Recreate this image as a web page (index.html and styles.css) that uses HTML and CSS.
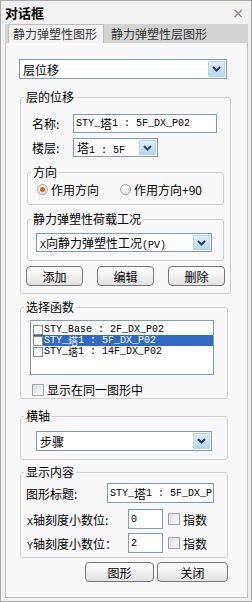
FILE: index.html
```html
<!DOCTYPE html>
<html lang="zh-CN">
<head>
    <meta charset="UTF-8">
    <title>对话框</title>
    <link rel="stylesheet" href="styles.css">
</head>
<body>
<div class="dialog">
    <div class="titlebar">
        <span class="title">对话框</span>
        <span class="close">×</span>
    </div>
    <div class="tabs">
        <span class="tab active">静力弹塑性图形</span>
        <span class="tab">静力弹塑性层图形</span>
    </div>

    <div class="panel">
        <div class="combo top-combo">
            <span>层位移</span>
            <span class="arrow"><svg width="9" height="6" viewBox="0 0 9 6"><path d="M1 1 L4.5 4.5 L8 1" fill="none" stroke="#2b3f63" stroke-width="2"/></svg></span>
        </div>

        <fieldset class="group g-disp">
            <legend>层的位移</legend>
            <div class="row first">
                <span class="label">名称:</span>
                <div class="textbox name-box mono">STY_<span class="cjk">塔</span>1 : 5F_DX_P02</div>
            </div>
            <div class="row">
                <span class="label">楼层:</span>
                <div class="combo floor-combo">
                    <span class="mono"><span class="cjk">塔</span>1 : 5F</span>
                    <span class="arrow"><svg width="9" height="6" viewBox="0 0 9 6"><path d="M1 1 L4.5 4.5 L8 1" fill="none" stroke="#2b3f63" stroke-width="2"/></svg></span>
                </div>
            </div>

            <fieldset class="group inner g-dir">
                <legend>方向</legend>
                <div class="radios">
                    <span class="radio checked"></span><span class="radio-text">作用方向</span>
                    <span class="radio"></span><span class="radio-text">作用方向+90</span>
                </div>
            </fieldset>

            <fieldset class="group inner g-case">
                <legend>静力弹塑性荷载工况</legend>
                <div class="combo case-combo">
                    <span><span class="mono">X</span>向静力弹塑性工况<span class="mono">(PV)</span></span>
                    <span class="arrow"><svg width="9" height="6" viewBox="0 0 9 6"><path d="M1 1 L4.5 4.5 L8 1" fill="none" stroke="#2b3f63" stroke-width="2"/></svg></span>
                </div>
            </fieldset>

            <div class="btn-row">
                <button class="btn small">添加</button>
                <button class="btn small">编辑</button>
                <button class="btn small">删除</button>
            </div>
        </fieldset>

        <fieldset class="group g-func">
            <legend>选择函数</legend>
            <div class="listbox mono">
                <div class="item"><span class="box"></span>STY_Base : 2F_DX_P02</div>
                <div class="item selected"><span class="box"></span>STY_<span class="cjk">塔</span>1 : 5F_DX_P02</div>
                <div class="item"><span class="box"></span>STY_<span class="cjk">塔</span>1 : 14F_DX_P02</div>
            </div>
            <div class="check-row">
                <span class="checkbox"></span><span>显示在同一图形中</span>
            </div>
        </fieldset>

        <fieldset class="group g-axis">
            <legend>横轴</legend>
            <div class="combo axis-combo">
                <span>步骤</span>
                <span class="arrow"><svg width="9" height="6" viewBox="0 0 9 6"><path d="M1 1 L4.5 4.5 L8 1" fill="none" stroke="#2b3f63" stroke-width="2"/></svg></span>
            </div>
        </fieldset>

        <fieldset class="group g-show">
            <legend>显示内容</legend>
            <div class="show-row title-row">
                <span class="show-label">图形标题:</span>
                <div class="textbox title-box mono">STY_<span class="cjk">塔</span>1 : 5F_DX_P</div>
            </div>
            <div class="show-row x-row">
                <span class="show-label wide"><span class="mono">X</span>轴刻度小数位:</span>
                <div class="textbox digit-box mono">0</div>
                <span class="checkbox"></span><span>指数</span>
            </div>
            <div class="show-row y-row">
                <span class="show-label wide"><span class="mono">Y</span>轴刻度小数位：</span>
                <div class="textbox digit-box mono">2</div>
                <span class="checkbox"></span><span>指数</span>
            </div>
        </fieldset>

        <div class="footer">
            <button class="btn wide-btn">图形</button>
            <button class="btn wide-btn close-btn">关闭</button>
        </div>
    </div>
</div>
</body>
</html>
```

FILE: styles.css
```css
* {
    box-sizing: border-box;
}
body {
    margin: 0;
    font-family: "Noto Sans CJK SC", sans-serif;
    font-size: 12px;
    color: #000;
    background: #fff;
}
.mono {
    font-family: "Liberation Mono", monospace;
    font-size: 10px;
}
.cjk {
    font-family: "Noto Sans CJK SC", sans-serif;
    font-size: 12px;
}
.dialog {
    width: 252px;
    height: 602px;
    border: 1px solid #a8a8a8;
    background: #f2f2f2;
    display: flex;
    flex-direction: column;
}
.titlebar {
    height: 23px;
    display: flex;
    align-items: center;
    justify-content: space-between;
    padding: 0 7px 0 4px;
}
.title {
    font-weight: bold;
    font-size: 13px;
}
.close {
    color: #7a7a7a;
    font-size: 14px;
    font-family: "DejaVu Sans", sans-serif;
}
.tabs {
    height: 19px;
    margin: 0 3px 0 4px;
    background: #d3d3d3;
    display: flex;
    align-items: flex-end;
    padding-left: 3px;
}
.tab {
    line-height: 18px;
    padding: 0 6px 0 4px;
    color: #333;
}
.tab.active {
    background: #f4f4f4;
    border: 1px solid #bdbdbd;
    border-bottom: none;
    margin-right: 3px;
}
.panel {
    flex: 1;
    margin: 0 3px 3px 4px;
    border: 1px solid #bdbdbd;
    border-top: none;
    background: #f8f8f8;
    padding: 16px 0 0 13px;
}

/* combo boxes */
.combo {
    height: 20px;
    border: 1px solid #7f9db9;
    background: #fff;
    display: flex;
    align-items: center;
    padding-left: 3px;
    white-space: nowrap;
}
.combo .arrow {
    margin-left: auto;
    margin-right: 1px;
    width: 17px;
    height: 16px;
    border: 1px solid #b9d4ee;
    border-radius: 1px;
    background: linear-gradient(#e1effb, #b5d5f3);
    display: flex;
    align-items: center;
    justify-content: center;
}
.top-combo {
    width: 208px;
}

/* group boxes */
.group {
    margin: 0;
    padding: 0;
    border: 1px solid #cfcfcf;
    border-radius: 3px;
}
.group legend {
    margin-left: 3px;
    padding: 0 2px;
    line-height: 14px;
}
.group:not(.inner) {
    width: 208px;
    margin-left: 1px;
}
.g-disp {
    margin-top: 11px;
    padding-bottom: 7px !important;
}
.row {
    display: flex;
    align-items: center;
    height: 19px;
    margin-top: 5px;
    padding-left: 11px;
}
.row.first {
    margin-top: 10px;
}
.label {
    width: 41px;
}
.textbox {
    height: 19px;
    border: 1px solid #7f9db9;
    background: #fff;
    display: flex;
    align-items: center;
    padding-left: 2px;
    white-space: nowrap;
    overflow: hidden;
}
.name-box {
    width: 144px;
}
.floor-combo {
    width: 85px;
    height: 19px;
}
.floor-combo .arrow {
    height: 15px;
}
.inner {
    margin: 8px 6px 0 6px;
}
.g-dir {
    padding-bottom: 8px;
}
.radios {
    display: flex;
    align-items: center;
    height: 14px;
    margin-top: 3px;
    padding-left: 9px;
    white-space: nowrap;
}
.radio {
    flex: none;
    width: 11px;
    height: 11px;
    border-radius: 50%;
    border: 1px solid #a9a9a9;
    background: radial-gradient(circle at 40% 35%, #ffffff, #d2d2d2);
    display: flex;
    align-items: center;
    justify-content: center;
}
.radio.checked::after {
    content: "";
    width: 5px;
    height: 5px;
    border-radius: 50%;
    background: #e4582a;
}
.radio-text {
    flex: none;
    margin-left: 3px;
    margin-right: 21px;
}
.g-case {
    margin-top: 7px;
    padding-bottom: 8px;
}
.case-combo {
    width: 176px;
    margin: 7px 0 0 8px;
    height: 19px;
}
.case-combo .arrow {
    height: 15px;
}
.btn-row {
    display: flex;
    justify-content: space-between;
    padding: 0 5px;
    margin-top: 5px;
}
.btn {
    height: 20px;
    padding: 0;
    font-family: "Noto Sans CJK SC", sans-serif;
    font-size: 12px;
    color: #000;
    border: 1px solid #767676;
    border-radius: 4px;
    background: linear-gradient(#ffffff 0%, #f3f3f3 45%, #e2e2e2 100%);
}
.btn.small {
    width: 57px;
}

/* function list */
.g-func {
    margin-top: 6px;
    padding-bottom: 2px !important;
}
.listbox {
    width: 184px;
    height: 55px;
    margin: 6px 0 0 9px;
    border: 1px solid #7f9db9;
    background: #fff;
    padding: 3px 0 0 2px;
}
.item {
    display: flex;
    align-items: center;
    height: 11px;
    line-height: 11px;
    white-space: nowrap;
}
.item .cjk {
    font-size: 10px;
    line-height: 11px;
}
.item.selected {
    background: #316ac5;
    color: #fff;
    width: 180px;
}
.box {
    flex: none;
    width: 10px;
    height: 10px;
    border: 1px solid #8a8a8a;
    background: #fff;
    margin-right: 1px;
}
.check-row {
    display: flex;
    align-items: center;
    height: 13px;
    margin: 8px 0 0 11px;
}
.checkbox {
    flex: none;
    width: 12px;
    height: 12px;
    border: 1px solid #9ba6b3;
    background: linear-gradient(135deg, #dcdcdc, #ffffff);
    margin-right: 3px;
}

.g-axis {
    margin-top: 10px;
    padding-bottom: 8px !important;
}
.axis-combo {
    width: 176px;
    margin: 8px 0 0 15px;
}

.g-show {
    margin-top: 5px;
    padding-bottom: 4px !important;
}
.show-row {
    display: flex;
    align-items: center;
    padding-left: 5px;
    white-space: nowrap;
}
.title-row {
    margin-top: 4px;
    height: 20px;
}
.title-row .textbox {
    height: 20px;
}
.x-row {
    margin-top: 6px;
}
.y-row {
    margin-top: 4px;
}
.show-label {
    width: 81px;
}
.show-label.wide {
    width: 102px;
    padding-left: 1px;
}
.title-box {
    width: 107px;
}
.digit-box {
    width: 35px;
    height: 20px;
    margin-right: 5px;
}
.footer {
    display: flex;
    justify-content: flex-end;
    gap: 3px;
    width: 209px;
    margin-top: 4px;
}
.wide-btn {
    width: 69px;
}
.close-btn {
    width: 71px;
}
```
